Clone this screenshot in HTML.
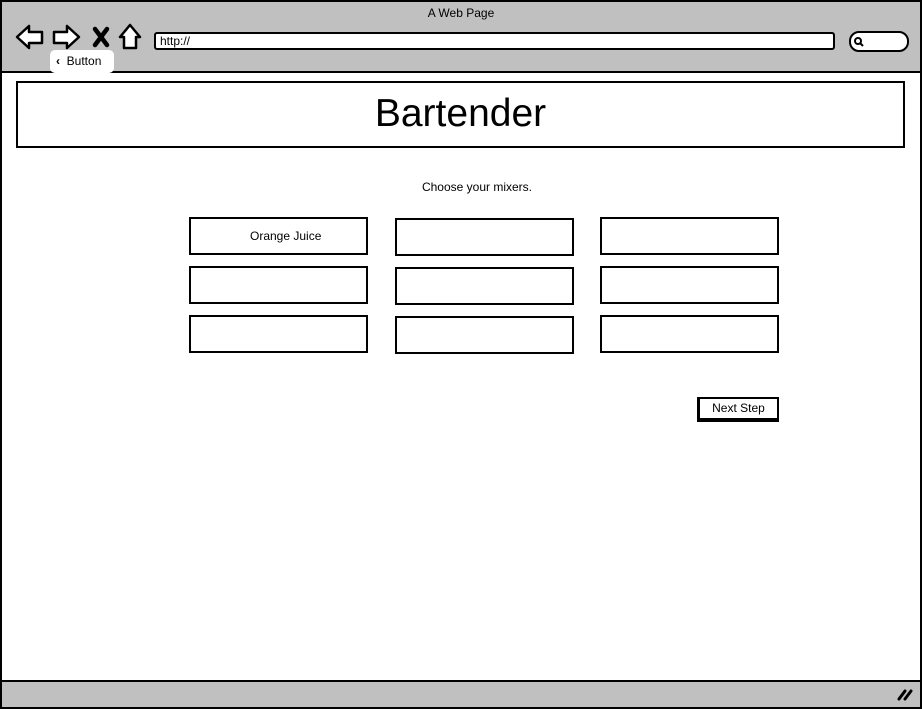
<!DOCTYPE html>
<html><head><meta charset="utf-8"><style>
*{margin:0;padding:0;box-sizing:border-box}
body{width:922px;height:709px;background:#fff;font-family:"Liberation Sans",sans-serif;position:relative;overflow:hidden}
.abs{position:absolute}
.box{position:absolute;border:2px solid #000;background:#fff}
</style></head><body>
<div class="abs" style="left:0;top:0;width:922px;height:709px;border:2px solid #000;background:#fff"></div>
<div class="abs" style="left:2px;top:2px;width:918px;height:71px;background:#c0c0c0;border-bottom:2px solid #000"></div>
<div class="abs" style="left:0;top:6px;width:922px;text-align:center;font-size:12px">A Web Page</div>
<svg class="abs" style="left:0;top:0" width="922" height="80">
<path d="M17 37 L29 26 L29 32 L42 32 L42 43 L29 43 L29 48 Z" fill="#fff" stroke="#000" stroke-width="2.5" stroke-linejoin="round"/>
<path d="M79 37 L67 26 L67 32 L54 32 L54 43 L67 43 L67 48 Z" fill="#fff" stroke="#000" stroke-width="2.5" stroke-linejoin="round"/>
<path d="M95 29 L107 45 M107 29 L95 45" stroke="#000" stroke-width="4.5" stroke-linecap="round"/>
<path d="M130 25 L120 37 L124 37 L124 48 L136 48 L136 37 L140 37 Z" fill="#fff" stroke="#000" stroke-width="2.5" stroke-linejoin="round"/>
<rect x="850" y="32" width="58" height="19" rx="9" fill="#fff" stroke="#000" stroke-width="2"/>
<circle cx="858" cy="41" r="3" fill="none" stroke="#000" stroke-width="2"/>
<path d="M860 43 L863 46" stroke="#000" stroke-width="2"/>
</svg>
<div class="abs" style="left:154px;top:32px;width:681px;height:18px;background:#fff;border:2px solid #000;border-radius:3px;font-size:12px;padding-left:4px;line-height:14px">http://</div>
<div class="abs" style="left:50px;top:50px;width:64px;height:23px;background:#fff;border-radius:5px;font-size:12px;line-height:23px;padding-left:6px"><b>&lsaquo;</b>&nbsp; Button</div>
<div class="box" style="left:16px;top:81px;width:889px;height:67px;text-align:center;font-size:39px;font-weight:500;line-height:62px">Bartender</div>
<div class="abs" style="left:0;top:180px;width:954px;text-align:center;font-size:12px">Choose your mixers.</div>
<div class="box" style="left:189px;top:217px;width:179px;height:38px;font-size:12px;line-height:34px;padding-left:59px">Orange Juice</div>
<div class="box" style="left:395px;top:218px;width:179px;height:38px"></div>
<div class="box" style="left:600px;top:217px;width:179px;height:38px"></div>
<div class="box" style="left:189px;top:266px;width:179px;height:38px"></div>
<div class="box" style="left:395px;top:267px;width:179px;height:38px"></div>
<div class="box" style="left:600px;top:266px;width:179px;height:38px"></div>
<div class="box" style="left:189px;top:315px;width:179px;height:38px"></div>
<div class="box" style="left:395px;top:316px;width:179px;height:38px"></div>
<div class="box" style="left:600px;top:315px;width:179px;height:38px"></div>
<div class="abs" style="left:697px;top:397px;width:82px;height:25px;border:2px solid #000;border-left-width:3px;border-bottom-width:4px;background:#fff;font-size:12px;text-align:center;line-height:19px">Next Step</div>
<div class="abs" style="left:2px;top:680px;width:918px;height:27px;background:#c0c0c0;border-top:2px solid #000"></div>
<svg class="abs" style="left:895px;top:683px" width="25" height="24"><path d="M4 16 L10 8 M10 16 L16 8" stroke="#000" stroke-width="3" stroke-linecap="round"/></svg>
</body></html>
